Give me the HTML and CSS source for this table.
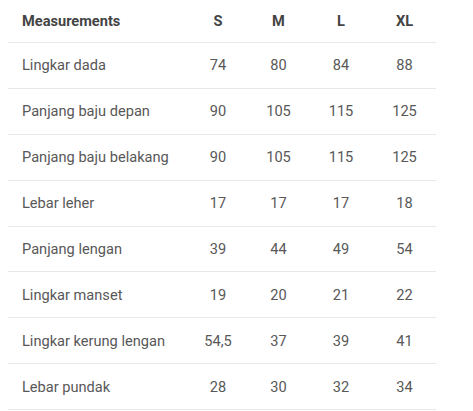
FILE: index.html
```html
<!DOCTYPE html>
<html>
<head>
<meta charset="utf-8">
<link rel="stylesheet" href="styles.css">
</head>
<body>
<table class="size-table">
  <thead>
    <tr><th class="label">Measurements</th><th>S</th><th>M</th><th>L</th><th>XL</th></tr>
  </thead>
  <tbody>
    <tr><td class="label">Lingkar dada</td><td>74</td><td>80</td><td>84</td><td>88</td></tr>
    <tr><td class="label">Panjang baju depan</td><td>90</td><td>105</td><td>115</td><td>125</td></tr>
    <tr><td class="label">Panjang baju belakang</td><td>90</td><td>105</td><td>115</td><td>125</td></tr>
    <tr><td class="label">Lebar leher</td><td>17</td><td>17</td><td>17</td><td>18</td></tr>
    <tr><td class="label">Panjang lengan</td><td>39</td><td>44</td><td>49</td><td>54</td></tr>
    <tr><td class="label">Lingkar manset</td><td>19</td><td>20</td><td>21</td><td>22</td></tr>
    <tr><td class="label">Lingkar kerung lengan</td><td>54,5</td><td>37</td><td>39</td><td>41</td></tr>
    <tr><td class="label">Lebar pundak</td><td>28</td><td>30</td><td>32</td><td>34</td></tr>
  </tbody>
</table>
</body>
</html>
```
FILE: styles.css
```css
html, body {
  margin: 0;
  padding: 0;
  background: #ffffff;
}
body {
  padding: 0 8px;
  font-family: "Roboto", "Liberation Sans", sans-serif;
}
.size-table {
  width: 428px;
  border-collapse: collapse;
  table-layout: fixed;
  color: #585858;
  font-size: 14.6px;
}
.size-table th,
.size-table td {
  padding: 0;
  text-align: center;
  border-bottom: 1px solid #e8e8e8;
}
.size-table th {
  height: 42px;
  font-weight: 700;
  color: #444444;
  font-size: 14.6px;
}
.size-table td {
  height: 44.9px;
}
.size-table .label {
  text-align: left;
  padding-left: 14px;
  width: 166px;
}
.size-table th:nth-child(2), .size-table td:nth-child(2) { width: 60px; }
.size-table th:nth-child(3), .size-table td:nth-child(3) { width: 61px; }
.size-table th:nth-child(4), .size-table td:nth-child(4) { width: 64px; }
```
